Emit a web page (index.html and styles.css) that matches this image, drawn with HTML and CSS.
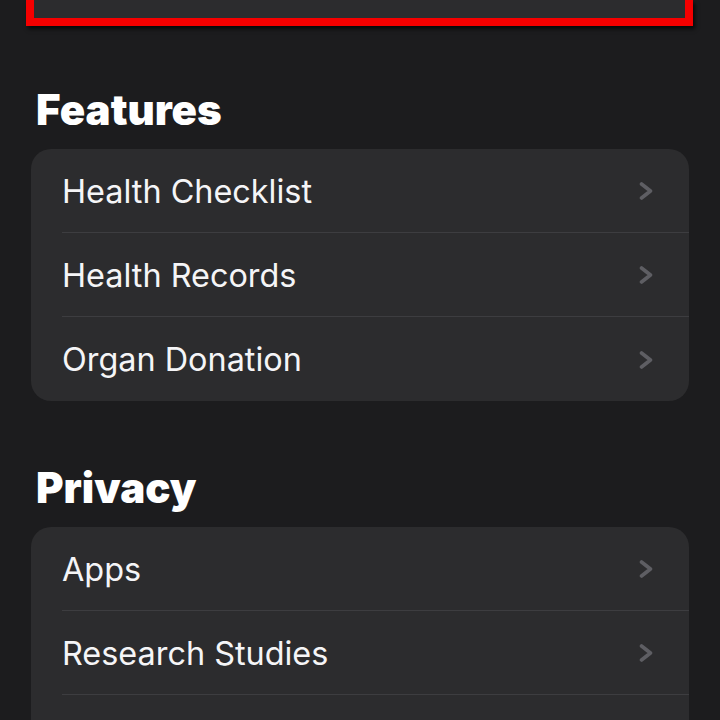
FILE: index.html
```html
<!doctype html>
<html>

<head>
  <meta name="viewport" content="width=device-width, initial-scale=1.0">
  <title>Health</title>
  <link rel="stylesheet" href="styles.css">
</head>

<body>

  <div class="highlight"></div>

  <h2 class="section-title">Features</h2>
  <ul class="group">
    <li class="row"><span>Health Checklist</span>
      <svg class="chevron" viewBox="0 0 16 18"><path d="M3.5 2 L12.5 9 L3.5 16" /></svg>
    </li>
    <li class="row"><span>Health Records</span>
      <svg class="chevron" viewBox="0 0 16 18"><path d="M3.5 2 L12.5 9 L3.5 16" /></svg>
    </li>
    <li class="row"><span>Organ Donation</span>
      <svg class="chevron" viewBox="0 0 16 18"><path d="M3.5 2 L12.5 9 L3.5 16" /></svg>
    </li>
  </ul>

  <h2 class="section-title privacy">Privacy</h2>
  <ul class="group">
    <li class="row"><span>Apps</span>
      <svg class="chevron" viewBox="0 0 16 18"><path d="M3.5 2 L12.5 9 L3.5 16" /></svg>
    </li>
    <li class="row"><span>Research Studies</span>
      <svg class="chevron" viewBox="0 0 16 18"><path d="M3.5 2 L12.5 9 L3.5 16" /></svg>
    </li>
    <li class="row"></li>
  </ul>

</body>

</html>
```

FILE: styles.css
```css
* {
  margin: 0;
  padding: 0;
  box-sizing: border-box;
}

html,
body {
  background: #1c1c1e;
}

body {
  font-family: Inter, "Noto Sans", sans-serif;
  color: #f5f5f7;
  padding: 0 31px;
  overflow: hidden;
  height: 720px;
}

.highlight {
  height: 26px;
  margin: 0 -4px 0 -5px;
  background: #2c2c2e;
  border: 8px solid #f50000;
  border-top: none;
  box-shadow: 2px 3px 4px rgba(0, 0, 0, 0.7);
}

.section-title {
  margin: 60px 0 15px 5px;
  font-size: 42px;
  font-weight: 900;
  line-height: 48px;
  color: #ffffff;
}

.section-title.privacy {
  margin-top: 63px;
}

.group {
  list-style-type: none;
  background: #2c2c2e;
  border-radius: 20px;
  overflow: hidden;
}

.row {
  height: 84px;
  margin-left: 31px;
  padding: 1px 35px 0 0;
  display: flex;
  align-items: center;
  justify-content: space-between;
  border-bottom: 1px solid #3d3d40;
  font-size: 32.4px;
  font-weight: 400;
}

.row:last-child {
  border-bottom: none;
}

.chevron {
  width: 16px;
  height: 18px;
  fill: none;
  stroke: #5e5e63;
  stroke-width: 3.6;
  stroke-linecap: round;
  stroke-linejoin: round;
}
```
